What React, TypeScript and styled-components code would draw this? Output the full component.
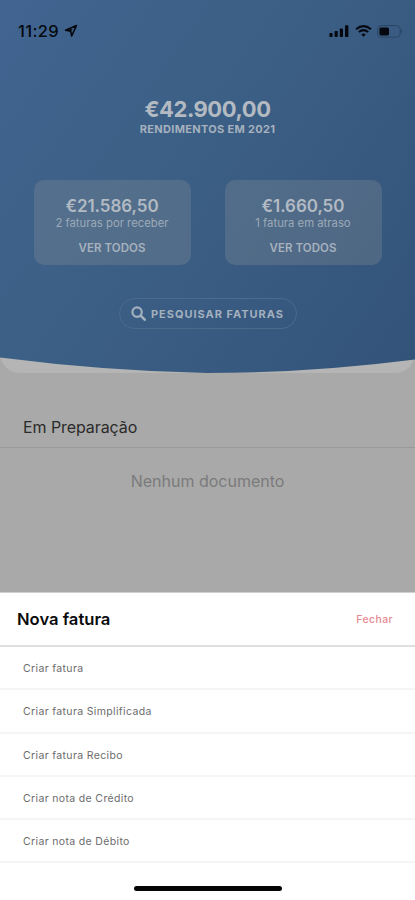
import React from 'react';
import styled, { createGlobalStyle } from 'styled-components';

const GlobalStyle = createGlobalStyle`
  * { box-sizing: border-box; }
  body { margin: 0; background: #a9a9a9; font-family: Inter, "Liberation Sans", sans-serif; }
  button { font: inherit; border: 0; background: none; padding: 0; margin: 0; color: inherit; }
`;

const Screen = styled.div`
  width: 415px;
  height: 900px;
  display: flex;
  flex-direction: column;
  overflow: hidden;
  background: #a9a9a9;
`;

const HeroBacking = styled.div`
  height: 373px;
  flex: none;
  background: #b5b5b5;
  border-radius: 0 0 20px 20px;
`;

const Hero = styled.header`
  height: 373px;
  display: flex;
  flex-direction: column;
  align-items: center;
  background: linear-gradient(125deg, #416491 0%, #3d6188 30%, #3a5c82 60%, #335379 100%);
  clip-path: path('M0 0H415V359.5Q310 373 207 373Q105 371 0 357.5Z');
`;

const StatusBar = styled.div`
  width: 100%;
  height: 62px;
  padding: 0 12px 0 18px;
  display: flex;
  align-items: center;
  justify-content: space-between;
  color: #05090f;
`;

const StatusGroup = styled.div<{ $gap: number }>`
  display: flex;
  align-items: center;
  gap: ${p => p.$gap}px;
`;

const Clock = styled.span`
  font-size: 16.5px;
  font-weight: 500;
  line-height: 20px;
  letter-spacing: 0.35px;
`;

const Total = styled.div`
  margin-top: 33px;
  font-size: 22px;
  font-weight: 700;
  line-height: 28px;
  letter-spacing: -0.45px;
  color: #b3bac2;
`;

const TotalLabel = styled.div`
  font-size: 11px;
  font-weight: 700;
  line-height: 12px;
  letter-spacing: 0.32px;
  color: #a6b1be;
`;

const Cards = styled.div`
  margin-top: 45px;
  width: 348px;
  display: flex;
  justify-content: space-between;
`;

const Card = styled.section`
  width: 157px;
  height: 85px;
  padding-top: 17px;
  display: flex;
  flex-direction: column;
  align-items: center;
  border-radius: 10px;
  background: rgba(150, 155, 155, 0.25);
`;

const Amount = styled.div`
  font-size: 17px;
  font-weight: 600;
  line-height: 19px;
  letter-spacing: -0.05px;
  color: #b2bac3;
`;

const CardNote = styled.div`
  font-size: 11.3px;
  line-height: 14px;
  color: #9caab8;
`;

const CardAction = styled.button`
  margin-top: 11px;
  font-size: 11.5px;
  font-weight: 600;
  line-height: 14px;
  letter-spacing: 0.05px;
  color: #a7b2be;
`;

const SearchButton = styled.button`
  margin-top: 33px;
  width: 178px;
  height: 31px;
  display: flex;
  align-items: center;
  justify-content: center;
  gap: 5px;
  border: 1px solid #4c6a8b;
  border-radius: 16px;
  color: #a3b0be;
`;

const SearchLabel = styled.span`
  font-size: 11px;
  font-weight: 700;
  line-height: 14px;
  letter-spacing: 0.98px;
`;

const Drafts = styled.main`
  flex: 1;
`;

const DraftsTitle = styled.h2`
  margin: 0;
  height: 75px;
  padding: 44px 23px 0;
  font-size: 16px;
  font-weight: 400;
  line-height: 20px;
  letter-spacing: -0.08px;
  color: #2b2b2b;
  border-bottom: 1px solid #999;
`;

const Empty = styled.p`
  margin: 23px 0 0;
  text-align: center;
  font-size: 16px;
  line-height: 20px;
  letter-spacing: 0;
  color: #7b7b7b;
`;

const Sheet = styled.div`
  flex: none;
  height: 308px;
  background: #fff;
  border-top: 1px solid #cfcfcf;
`;

const SheetHeader = styled.div`
  height: 54px;
  padding: 0 22px 0 17px;
  display: flex;
  align-items: center;
  justify-content: space-between;
  border-bottom: 2px solid #dedede;
`;

const SheetTitle = styled.h1`
  margin: 0;
  font-size: 16.6px;
  font-weight: 600;
  line-height: 20px;
  color: #0b0b0b;
`;

const Close = styled.button`
  padding-top: 2px;
  font-size: 10.5px;
  font-weight: 500;
  line-height: 14px;
  letter-spacing: 0.4px;
  color: #e58a94;
`;

const Options = styled.ul`
  margin: 0;
  padding: 0;
  list-style: none;
`;

const Option = styled.li`
  height: 43.3px;
  padding: 2px 23px 0;
  display: flex;
  align-items: center;
  font-size: 10.5px;
  letter-spacing: 0.35px;
  color: #6c6c6c;
  border-bottom: 2px solid #f5f5f5;
`;

const HomeIndicator = styled.div`
  width: 148px;
  height: 5px;
  margin: 23px auto 0;
  border-radius: 3px;
  background: #050505;
`;

const LocationIcon = () => (
  <svg width="14" height="14" viewBox="0 0 14 14" fill="none" stroke="currentColor" strokeWidth="1.6" strokeLinejoin="round">
    <path d="M12.4 1.6 1.6 6.3 6.7 7.1 7.7 12Z" />
    <path d="M1.4 6.3 6.9 7.1 8.2 5.3 4 5.5Z" fill="currentColor" strokeWidth="0.5" />
  </svg>
);

const SignalIcon = () => (
  <svg width="20" height="12" viewBox="0 0 20 12" fill="currentColor">
    <rect x="0.4" y="8" width="3.2" height="4" rx="0.8" />
    <rect x="5.6" y="6" width="3.2" height="6" rx="0.8" />
    <rect x="10.8" y="3.4" width="3.2" height="8.6" rx="0.8" />
    <rect x="16" y="0.2" width="3.4" height="11.8" rx="0.8" />
  </svg>
);

const WifiIcon = () => (
  <svg width="17" height="12" viewBox="0 0 17 12" fill="none" stroke="currentColor" strokeWidth="2">
    <path d="M1 4.3Q8.5-2 16 4.3" />
    <path d="M3.8 7.1Q8.5 3.2 13.2 7.1" />
    <path d="M8.5 11.8 6.3 9.5Q8.5 7.7 10.7 9.5Z" fill="currentColor" stroke="none" />
  </svg>
);

const BatteryIcon = () => (
  <svg width="26" height="13" viewBox="0 0 26 13">
    <rect x="0.6" y="0.6" width="22.6" height="11.6" rx="3.6" fill="none" stroke="#2b4664" />
    <rect x="2.4" y="2.4" width="9.6" height="8" rx="1.6" fill="currentColor" />
    <path d="M24.3 4.6Q26 6.4 24.3 8.4Z" fill="#1d344d" />
  </svg>
);

const SearchIcon = () => (
  <svg width="15" height="15" viewBox="0 0 15 15" fill="none" stroke="currentColor">
    <circle cx="6.1" cy="6.1" r="4.7" strokeWidth="2.2" />
    <path d="m9.6 9.6 4.1 4.1" strokeWidth="2.6" strokeLinecap="round" />
  </svg>
);

const summaries = [
  { amount: '€21.586,50', note: '2 faturas por receber' },
  { amount: '€1.660,50', note: '1 fatura em atraso' },
];

const options = [
  'Criar fatura',
  'Criar fatura Simplificada',
  'Criar fatura Recibo',
  'Criar nota de Crédito',
  'Criar nota de Débito',
];

export default function App() {
  return (
    <Screen>
      <GlobalStyle />
      <HeroBacking>
        <Hero>
          <StatusBar>
            <StatusGroup $gap={4.5}>
              <Clock>11:29</Clock>
              <LocationIcon />
            </StatusGroup>
            <StatusGroup $gap={5.5}>
              <SignalIcon />
              <WifiIcon />
              <BatteryIcon />
            </StatusGroup>
          </StatusBar>
          <Total>€42.900,00</Total>
          <TotalLabel>RENDIMENTOS EM 2021</TotalLabel>
          <Cards>
            {summaries.map(item => (
              <Card key={item.amount}>
                <Amount>{item.amount}</Amount>
                <CardNote>{item.note}</CardNote>
                <CardAction>VER TODOS</CardAction>
              </Card>
            ))}
          </Cards>
          <SearchButton>
            <SearchIcon />
            <SearchLabel>PESQUISAR FATURAS</SearchLabel>
          </SearchButton>
        </Hero>
      </HeroBacking>
      <Drafts>
        <DraftsTitle>Em Preparação</DraftsTitle>
        <Empty>Nenhum documento</Empty>
      </Drafts>
      <Sheet>
        <SheetHeader>
          <SheetTitle>Nova fatura</SheetTitle>
          <Close>Fechar</Close>
        </SheetHeader>
        <Options>
          {options.map(label => (
            <Option key={label}>{label}</Option>
          ))}
        </Options>
        <HomeIndicator />
      </Sheet>
    </Screen>
  );
}
